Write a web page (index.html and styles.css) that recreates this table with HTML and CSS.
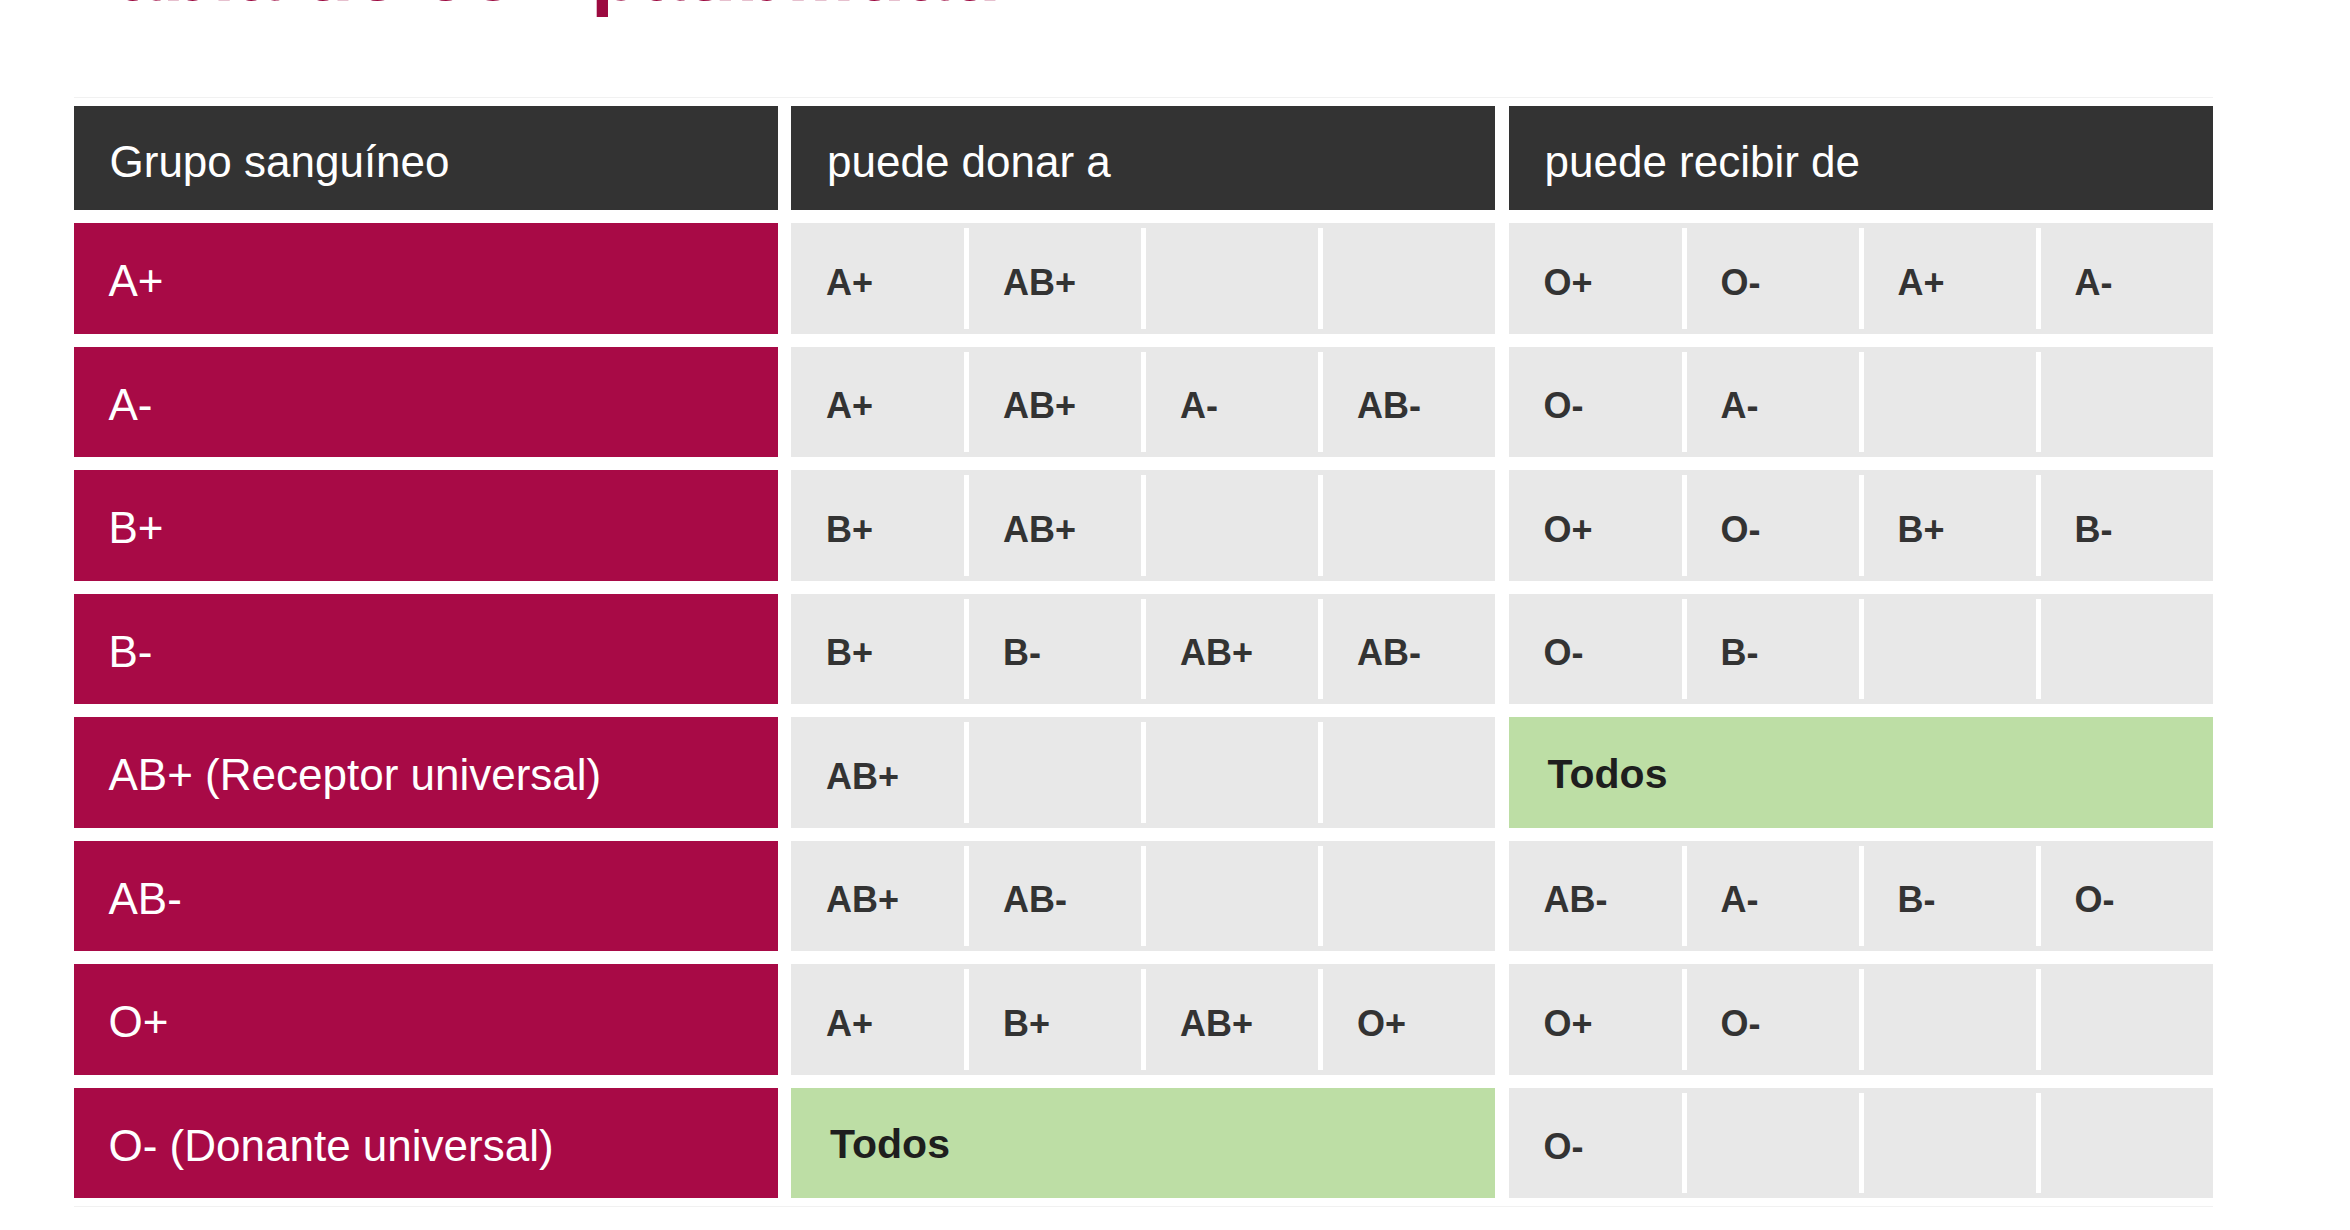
FILE: index.html
```html
<!DOCTYPE html>
<html lang="es">
<head>
<meta charset="utf-8">
<title>Tabla de compatibilidad</title>
<link rel="stylesheet" href="styles.css">
</head>
<body>
<h1 class="title">Tabla de compatibilidad</h1>
<div class="compat">
  <div class="grid">
    <div class="cell head">Grupo sanguíneo</div>
    <div class="cell head">puede donar a</div>
    <div class="cell head">puede recibir de</div>

    <div class="cell group">A+</div>
    <div class="cell data"><span class="sub">A+</span><span class="sub">AB+</span><span class="sub"></span><span class="sub"></span></div>
    <div class="cell data"><span class="sub">O+</span><span class="sub">O-</span><span class="sub">A+</span><span class="sub">A-</span></div>

    <div class="cell group">A-</div>
    <div class="cell data"><span class="sub">A+</span><span class="sub">AB+</span><span class="sub">A-</span><span class="sub">AB-</span></div>
    <div class="cell data"><span class="sub">O-</span><span class="sub">A-</span><span class="sub"></span><span class="sub"></span></div>

    <div class="cell group">B+</div>
    <div class="cell data"><span class="sub">B+</span><span class="sub">AB+</span><span class="sub"></span><span class="sub"></span></div>
    <div class="cell data"><span class="sub">O+</span><span class="sub">O-</span><span class="sub">B+</span><span class="sub">B-</span></div>

    <div class="cell group">B-</div>
    <div class="cell data"><span class="sub">B+</span><span class="sub">B-</span><span class="sub">AB+</span><span class="sub">AB-</span></div>
    <div class="cell data"><span class="sub">O-</span><span class="sub">B-</span><span class="sub"></span><span class="sub"></span></div>

    <div class="cell group">AB+ (Receptor universal)</div>
    <div class="cell data"><span class="sub">AB+</span><span class="sub"></span><span class="sub"></span><span class="sub"></span></div>
    <div class="cell all">Todos</div>

    <div class="cell group">AB-</div>
    <div class="cell data"><span class="sub">AB+</span><span class="sub">AB-</span><span class="sub"></span><span class="sub"></span></div>
    <div class="cell data"><span class="sub">AB-</span><span class="sub">A-</span><span class="sub">B-</span><span class="sub">O-</span></div>

    <div class="cell group">O+</div>
    <div class="cell data"><span class="sub">A+</span><span class="sub">B+</span><span class="sub">AB+</span><span class="sub">O+</span></div>
    <div class="cell data"><span class="sub">O+</span><span class="sub">O-</span><span class="sub"></span><span class="sub"></span></div>

    <div class="cell group">O- (Donante universal)</div>
    <div class="cell all">Todos</div>
    <div class="cell data"><span class="sub">O-</span><span class="sub"></span><span class="sub"></span><span class="sub"></span></div>
  </div>
</div>
</body>
</html>
```

FILE: styles.css
```css
html, body {
  margin: 0;
  padding: 0;
  background: #ffffff;
  overflow: hidden;
}

body {
  font-family: "Liberation Sans", Arial, sans-serif;
}

.title {
  margin: -69px 0 84px 73px;
  font-size: 82px;
  line-height: 82px;
  font-weight: bold;
  color: #9c0a40;
  white-space: nowrap;
}

.compat {
  margin-left: 73.5px;
  width: 2139px;
  border-top: 1px solid #f1f1f1;
  border-bottom: 1px solid #f1f1f1;
  padding: 8px 0 8px;
}

.grid {
  display: grid;
  grid-template-columns: repeat(3, 704px);
  grid-template-rows: 104px repeat(8, 110.5px);
  column-gap: 13.5px;
  row-gap: 13px;
}

.cell {
  display: flex;
  align-items: center;
  box-sizing: border-box;
}

.head {
  background: #333333;
  color: #ffffff;
  font-size: 44px;
  padding: 7px 0 0 36px;
}

.group {
  background: #a80a46;
  color: #ffffff;
  font-size: 44px;
  padding: 6px 0 0 35px;
}

.data {
  background: #e8e8e8;
  padding: 5px 0;
  align-items: stretch;
}

.sub {
  flex: 1 1 0;
  display: flex;
  align-items: center;
  padding: 9px 0 0 34px;
  border-left: 5px solid #ffffff;
  color: #333333;
  font-size: 36px;
  font-weight: bold;
}

.sub:first-child {
  border-left: none;
  padding-left: 35px;
}

.all {
  background: #bddea5;
  color: #1e1e1e;
  font-size: 41px;
  font-weight: bold;
  padding: 4px 0 0 39px;
}
```
